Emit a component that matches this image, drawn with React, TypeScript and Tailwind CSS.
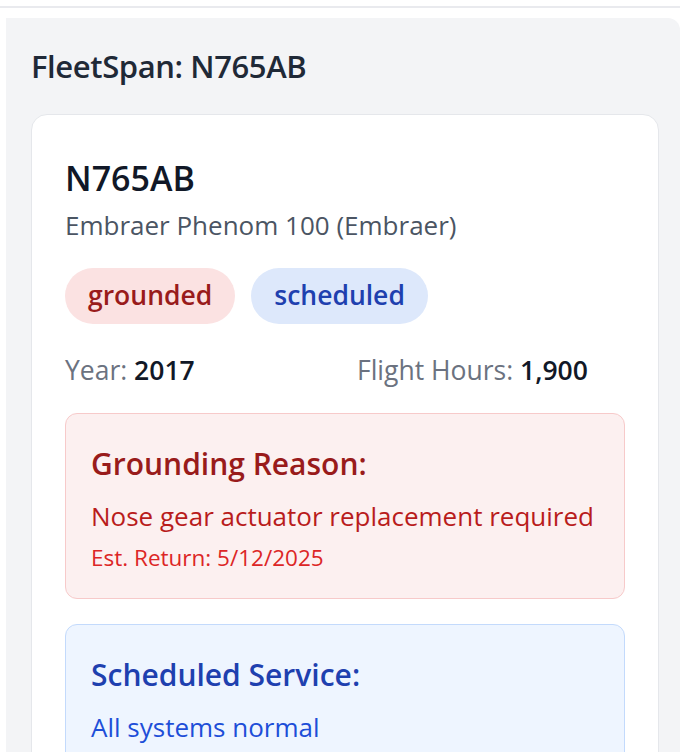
import React from "react";

export default function App() {
  const font = { fontFamily: '"Open Sans", "Noto Sans", sans-serif' };
  return (
    <div className="w-[680px] h-[752px] overflow-hidden bg-white" style={font}>
      <div className="pt-[6px]">
        <div className="h-[2px] bg-[#e9eaee]" />
      </div>
      <div className="ml-[6px] mt-[10px] h-[800px] rounded-tr-xl bg-[#f3f4f6] pl-[25px] pr-[21px] pt-[28px]">
        <h1 className="text-[31px] leading-[40px] font-semibold text-[#1f2937] tracking-[-0.4px]">
          FleetSpan: N765AB
        </h1>
        <div className="mt-[28px] rounded-2xl border border-[#e5e7eb] bg-white px-[33px] pt-[43px] pb-[33px]">
          <h2 className="text-[34px] leading-[40px] font-semibold text-[#111827]">N765AB</h2>
          <p className="mt-[9px] text-[26px] leading-[36px] text-[#4b5563]">
            Embraer Phenom 100 (Embraer)
          </p>
          <div className="mt-[25px] flex gap-[16px]">
            <span className="h-[56px] rounded-full bg-[#fbe2e2] px-[23px] flex items-center text-[26.5px] font-semibold text-[#991b1b]">
              grounded
            </span>
            <span className="h-[56px] rounded-full bg-[#dde8fb] px-[23px] flex items-center text-[26.5px] font-semibold text-[#1e40af]">
              scheduled
            </span>
          </div>
          <div className="mt-[28px] grid grid-cols-2 gap-[24px] text-[26.5px] leading-[36px]">
            <div>
              <span className="text-[#6b7280]">Year: </span>
              <span className="font-semibold text-[#111827]">2017</span>
            </div>
            <div>
              <span className="text-[#6b7280]">Flight Hours: </span>
              <span className="font-semibold text-[#111827]">1,900</span>
            </div>
          </div>
          <div className="mt-[25px] rounded-xl border border-[#f7caca] bg-[#fcf0f0] px-[25px] pt-[28px] pb-[24px]">
            <h3 className="text-[30px] leading-[44px] font-semibold text-[#991b1b]">
              Grounding Reason:
            </h3>
            <p className="mt-[10px] whitespace-nowrap text-[26px] leading-[40px] text-[#b91c1c]">
              Nose gear actuator replacement required
            </p>
            <p className="mt-[5px] text-[22.5px] leading-[33px] text-[#dc2626]">
              Est. Return: 5/12/2025
            </p>
          </div>
          <div className="mt-[25px] rounded-xl border border-[#c3dafc] bg-[#eef5ff] px-[25px] pt-[28px] pb-[24px]">
            <h3 className="text-[30px] leading-[44px] font-semibold text-[#1e40af]">
              Scheduled Service:
            </h3>
            <p className="mt-[10px] whitespace-nowrap text-[26px] leading-[40px] text-[#1d4ed8]">
              All systems normal
            </p>
          </div>
        </div>
      </div>
    </div>
  );
}
